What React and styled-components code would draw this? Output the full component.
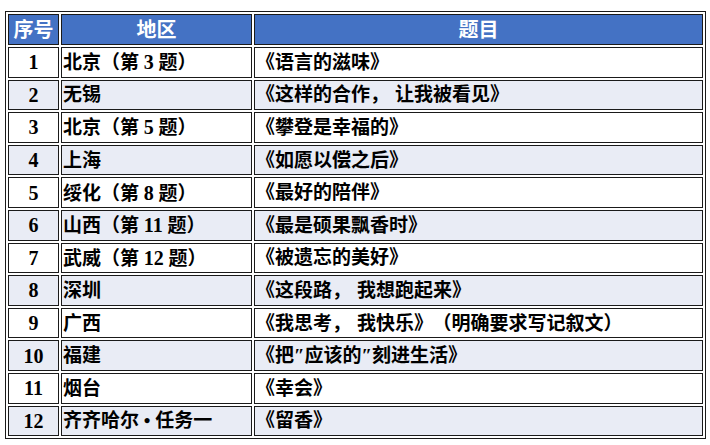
import React from 'react';
import styled, { createGlobalStyle } from 'styled-components';

const GlobalStyle = createGlobalStyle`
  html, body {
    margin: 0;
    padding: 0;
    background: #ffffff;
  }
  body {
    font-family: "Liberation Serif", "Noto Sans CJK SC", serif;
  }
`;

const Page = styled.div`
  padding: 11px 0 0 5px;
`;

const Table = styled.table`
  border: 1px solid #1a1a1a;
  border-collapse: separate;
  border-spacing: 2px;
  table-layout: fixed;
  width: 701px;
`;

const HeadCell = styled.th`
  box-sizing: border-box;
  width: ${(p) => p.$w}px;
  height: 31px;
  padding: 0;
  background: #4472c4;
  border: 1px solid #1a1a1a;
  color: #ffffff;
  font-family: "Liberation Serif", "Noto Sans CJK SC", serif;
  font-size: 20px;
  font-weight: 600;
  line-height: 1;
  text-align: center;
  white-space: nowrap;
`;

const Cell = styled.td`
  box-sizing: border-box;
  height: 30.6px;
  padding: 0 0 0 ${(p) => (p.$center ? 0 : 1)}px;
  background: ${(p) => (p.$striped ? '#e9ecf5' : '#ffffff')};
  border: 1px solid #1a1a1a;
  color: #000000;
  font-family: "Liberation Serif", "Noto Sans CJK SC", serif;
  font-size: ${(p) => (p.$center ? 20 : 19)}px;
  font-weight: 600;
  line-height: 1;
  text-align: ${(p) => (p.$center ? 'center' : 'left')};
  white-space: nowrap;
  overflow: hidden;
`;

const Num = styled.span`
  font-size: 20px;
  font-weight: 700;
`;

const Comma = styled.span`
  margin-right: 6px;
`;

const Aside = styled.span`
  margin-left: 9px;
`;

const rows = [
  ['1', '北京（第 3 题）', '《语言的滋味》'],
  ['2', '无锡', '《这样的合作，让我被看见》'],
  ['3', '北京（第 5 题）', '《攀登是幸福的》'],
  ['4', '上海', '《如愿以偿之后》'],
  ['5', '绥化（第 8 题）', '《最好的陪伴》'],
  ['6', '山西（第 11 题）', '《最是硕果飘香时》'],
  ['7', '武威（第 12 题）', '《被遗忘的美好》'],
  ['8', '深圳', '《这段路，我想跑起来》'],
  ['9', '广西', '《我思考，我快乐》', '（明确要求写记叙文）'],
  ['10', '福建', '《把″应该的″刻进生活》'],
  ['11', '烟台', '《幸会》'],
  ['12', '齐齐哈尔 • 任务一', '《留香》'],
];

// digits get the larger Latin size, full-width commas get their extra room
function renderText(text) {
  return text.split(/(\d+|，)/).map((part, i) => {
    if (part === '，') return <Comma key={i}>，</Comma>;
    if (/^\d+$/.test(part)) return <Num key={i}>{part}</Num>;
    return part;
  });
}

export default function App() {
  return (
    <>
      <GlobalStyle />
      <Page>
        <Table>
          <thead>
            <tr>
              <HeadCell $w={51}>序号</HeadCell>
              <HeadCell $w={191}>地区</HeadCell>
              <HeadCell $w={449}>题目</HeadCell>
            </tr>
          </thead>
          <tbody>
            {rows.map(([no, region, title, note], i) => (
              <tr key={no}>
                <Cell $center $striped={i % 2 === 1}>{no}</Cell>
                <Cell $striped={i % 2 === 1}>{renderText(region)}</Cell>
                <Cell $striped={i % 2 === 1}>
                  {renderText(title)}
                  {note && <Aside>{note}</Aside>}
                </Cell>
              </tr>
            ))}
          </tbody>
        </Table>
      </Page>
    </>
  );
}
